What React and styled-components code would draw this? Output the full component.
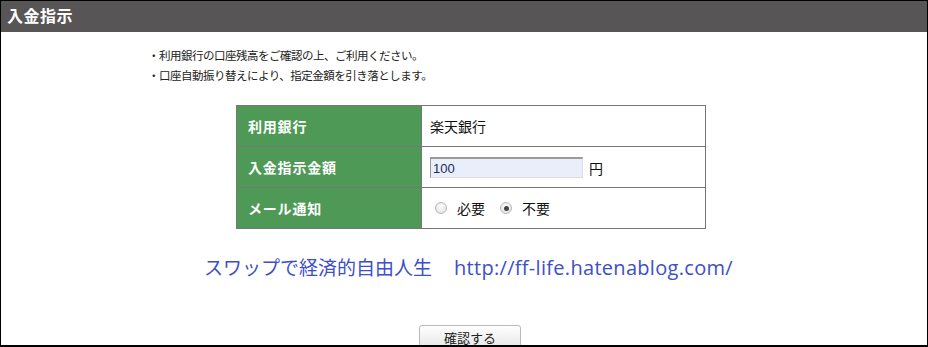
import React from "react";
import styled, { createGlobalStyle } from "styled-components";

const Global = createGlobalStyle`
  html, body { margin: 0; padding: 0; background: #fff; }
  body { width: 928px; height: 347px; overflow: hidden; font-family: "Noto Sans CJK JP", "Noto Sans", sans-serif; }
`;

const Frame = styled.div`
  box-sizing: border-box;
  width: 928px;
  height: 347px;
  border: 1px solid #000;
  border-bottom-width: 2px;
  overflow: hidden;
  background: #fff;
`;

const Header = styled.div`
  height: 31px;
  background: #575556;
  color: #fff;
  font-size: 16px;
  font-weight: 700;
  line-height: 29px;
  padding-left: 6px;
  letter-spacing: 0.5px;
`;

const Notes = styled.ul`
  list-style: none;
  margin: 13px 0 0;
  padding: 0 0 0 147px;
  font-size: 11.5px;
  line-height: 20px;
  color: #222;
  letter-spacing: -0.5px;
`;

const Table = styled.table`
  margin: 20px 0 0 235px;
  width: 470px;
  border-collapse: collapse;
  font-size: 14px;
`;

const Th = styled.th`
  width: 185px;
  height: 40px;
  padding: 0 0 0 11px;
  box-sizing: border-box;
  background: #4f9956;
  color: #fff;
  text-align: left;
  font-weight: 700;
  letter-spacing: 0.8px;
  border: 1px solid #777;
`;

const Td = styled.td`
  height: 40px;
  padding: 0 0 0 8px;
  border: 1px solid #777;
  color: #111;
`;

const Amount = styled.input`
  box-sizing: border-box;
  width: 153px;
  height: 21px;
  margin: 0 6px 0 0;
  padding: 1px 2px 0;
  border: 1px solid #dcdcdc;
  border-top: 2px solid #9a9a9a;
  border-left: 1px solid #9a9a9a;
  background: #e8eefa;
  color: #1a2a5a;
  font-family: "Liberation Sans", Arial, sans-serif;
  font-size: 13px;
  vertical-align: middle;
  outline: none;
`;

const Unit = styled.span`
  vertical-align: middle;
`;

const RadioGroup = styled.div`
  display: flex;
  align-items: center;
  gap: 15px;
  padding-left: 5px;
`;

const RadioLabel = styled.label`
  display: flex;
  align-items: center;
  gap: 10px;
`;

const RadioMark = styled.span`
  box-sizing: border-box;
  width: 12px;
  height: 12px;
  border-radius: 50%;
  border: 1px solid #b8b8b8;
  background: radial-gradient(circle at 50% 35%, #fdfdfd, #dedede);
  display: inline-flex;
  align-items: center;
  justify-content: center;
  &::after {
    content: "";
    width: 5px;
    height: 5px;
    border-radius: 50%;
    background: ${(p) => (p.$checked ? "#444" : "transparent")};
  }
`;

const Banner = styled.div`
  margin: 26px 0 0 203px;
  color: #3d4fc9;
  font-size: 19px;
  line-height: 24px;
  white-space: pre;
`;

const Url = styled.span`
  font-family: "Open Sans", "Noto Sans", sans-serif;
  font-size: 20px;
  letter-spacing: 0.3px;
  margin-left: 3px;
`;

const ButtonRow = styled.div`
  margin: 44px 0 0 418px;
`;

const Button = styled.button`
  box-sizing: border-box;
  width: 102px;
  height: 26px;
  border: 1px solid #b9b9b9;
  border-radius: 3px;
  background: linear-gradient(#ffffff, #e4e4e4);
  font-family: "Noto Sans CJK JP", sans-serif;
  font-size: 13px;
  color: #222;
  padding: 0;
`;

export default function App() {
  return (
    <>
      <Global />
      <Frame>
        <Header>入金指示</Header>
        <Notes>
          <li>・利用銀行の口座残高をご確認の上、ご利用ください。</li>
          <li>・口座自動振り替えにより、指定金額を引き落とします。</li>
        </Notes>
        <Table>
          <tbody>
            <tr>
              <Th>利用銀行</Th>
              <Td>楽天銀行</Td>
            </tr>
            <tr>
              <Th>入金指示金額</Th>
              <Td>
                <Amount defaultValue="100" />
                <Unit>円</Unit>
              </Td>
            </tr>
            <tr>
              <Th>メール通知</Th>
              <Td>
                <RadioGroup>
                  <RadioLabel>
                    <RadioMark />
                    必要
                  </RadioLabel>
                  <RadioLabel>
                    <RadioMark $checked />
                    不要
                  </RadioLabel>
                </RadioGroup>
              </Td>
            </tr>
          </tbody>
        </Table>
        <Banner>
          スワップで経済的自由人生　<Url>http://ff-life.hatenablog.com/</Url>
        </Banner>
        <ButtonRow>
          <Button>確認する</Button>
        </ButtonRow>
      </Frame>
    </>
  );
}
